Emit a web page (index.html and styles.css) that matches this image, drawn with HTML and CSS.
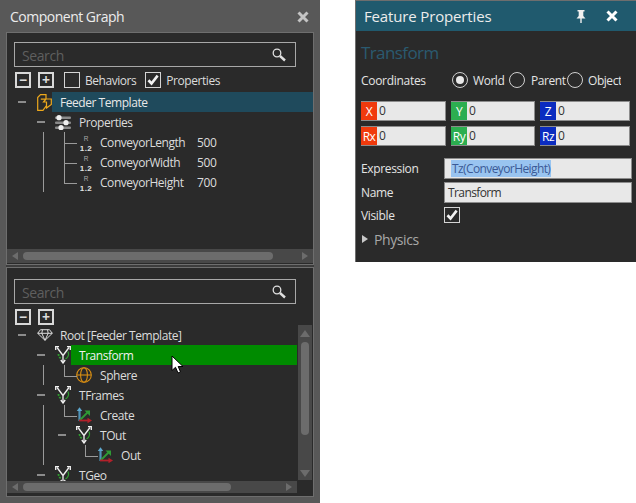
FILE: index.html
```html
<!DOCTYPE html>
<html lang="en">
<head>
<meta charset="utf-8">
<title>Component Graph</title>
<link rel="stylesheet" href="styles.css">
</head>
<body>
<svg class="defs" width="0" height="0">
  <symbol id="i-frame" viewBox="0 0 16 18">
    <path d="M8 9.500 2 1.500M8 9.500 14 1.500M8 9.500V16" fill="none" stroke="#f0f0f0" stroke-width="1.300"/>
    <path d="M.7 4V.7H4M15.300 4V.7H12M5.800 14 8 17 10.200 14" fill="none" stroke="#f4f4f4" stroke-width="1.300"/>
    <path d="M3.500 8A5.500 5.500 0 0 0 6.500 12.800" fill="none" stroke="#2f9e2f" stroke-width="1.800" stroke-dasharray="2 1"/>
    <path d="M13 5.500A6 6 0 0 1 10.500 13" fill="none" stroke="#2f9e2f" stroke-width="1.300"/>
  </symbol>
  <symbol id="i-axes" viewBox="0 0 16 16">
    <path d="M3.500 14V3" stroke="#4f93b8" stroke-width="2.200" fill="none"/>
    <path d="M.8 4 3.500 .3 6.200 4Z" fill="#5fa8cf"/>
    <path d="M4 13 11.500 5.500" stroke="#2f9a35" stroke-width="1.800" fill="none"/>
    <path d="M8.500 3.500H14V9Z" fill="#2f9a35"/>
    <path d="M3 13.500H13" stroke="#b3202a" stroke-width="1.800" fill="none"/>
    <path d="M11.500 10.800 16 13.500 11.500 16.200Z" fill="#b3202a"/>
  </symbol>
  <symbol id="i-sphere" viewBox="0 0 16 16">
    <g fill="none" stroke="#d98e12" stroke-width="1.100">
      <circle cx="8" cy="8" r="7.300"/>
      <ellipse cx="8" cy="8" rx="3.400" ry="7.300"/>
      <path d="M0.800 8H15.200"/>
    </g>
  </symbol>
  <symbol id="i-gem" viewBox="0 0 16 12">
    <path d="M3.500 .7H12.500L15.300 4.300 8 11.300 .7 4.300ZM.7 4.300H15.300M5.500 .7 4.800 4.300 8 11.300 11.200 4.300 10.500 .7" fill="none" stroke="#dcdcdc" stroke-width="1"/>
  </symbol>
  <symbol id="i-template" viewBox="0 0 15 17">
    <path d="M.7 3.500 3.500.7H9V5H14.300V10.500L9.500 14V11.500L6 16.300H.7ZM3.800 5.200H9M9 5 6.500 8H9.500V11.500" fill="none" stroke="#eda81c" stroke-width="1.200"/>
  </symbol>
  <symbol id="i-props" viewBox="0 0 16 15">
    <rect x="0" y="1.500" width="16" height="2.500" rx="1" fill="#8a8a8a"/>
    <rect x="0" y="6.500" width="16" height="2.500" rx="1" fill="#8a8a8a"/>
    <rect x="0" y="11.500" width="16" height="2.500" rx="1" fill="#8a8a8a"/>
    <circle cx="4" cy="2.700" r="2.600" fill="#f0f0f0"/>
    <circle cx="11" cy="7.700" r="2.600" fill="#f0f0f0"/>
    <circle cx="6" cy="12.700" r="2.600" fill="#f0f0f0"/>
  </symbol>
  <symbol id="i-search" viewBox="0 0 14 14">
    <circle cx="5" cy="5" r="3.800" fill="none" stroke="#e0e0e0" stroke-width="1.300"/>
    <path d="M8 8 13 12.500" stroke="#e0e0e0" stroke-width="2.400"/>
  </symbol>
  <symbol id="i-close" viewBox="0 0 12 12">
    <path d="M1.500 1.500 10.500 10.500M10.500 1.500 1.500 10.500" stroke="currentColor" stroke-width="3"/>
  </symbol>
  <symbol id="i-pin" viewBox="0 0 12 13">
    <path d="M2.500 0H9.500V1.500H8.300V6L10.500 8.500H6.700V13H5.300V8.500H1.500L3.700 6V1.500H2.500Z" fill="#f0f0f0"/>
  </symbol>
  <symbol id="i-check" viewBox="0 0 16 16">
    <path d="M2.800 8.300 6.300 12 13.300 3" fill="none" stroke="#f2f2f2" stroke-width="3"/>
  </symbol>
</svg>

<main class="page">
  <section class="graph">
    <header class="graph-title">
      <h1 class="title-text">Component Graph</h1>
      <svg class="close close-dim"><use href="#i-close"/></svg>
    </header>

    <div class="pane pane-top">
      <div class="search"><span class="search-hint">Search</span><svg class="search-icon"><use href="#i-search"/></svg></div>
      <div class="tools">
        <span class="tool-btn">−</span>
        <span class="tool-btn">+</span>
        <span class="check check-a"></span><span class="tool-label">Behaviors</span>
        <span class="check check-b"><svg class="check-mark"><use href="#i-check"/></svg></span><span class="tool-label">Properties</span>
      </div>
      <div class="tree tree-top">
        <div class="row l0"><span class="exp"></span><svg class="ic ic-tmpl"><use href="#i-template"/></svg><span class="label sel-blue">Feeder Template</span></div>
        <div class="row l1"><span class="exp"></span><svg class="ic ic-props"><use href="#i-props"/></svg><span class="label">Properties</span></div>
        <div class="row l2 guide branch-long"><svg class="real" viewBox="0 0 12 16"><text class="real-r" x="6" y="6" text-anchor="middle">R</text><text class="real-n" x="6" y="15.500" text-anchor="middle">1.2</text></svg><span class="label name">ConveyorLength</span><span class="val">500</span></div>
        <div class="row l2 guide branch-long"><svg class="real" viewBox="0 0 12 16"><text class="real-r" x="6" y="6" text-anchor="middle">R</text><text class="real-n" x="6" y="15.500" text-anchor="middle">1.2</text></svg><span class="label name">ConveyorWidth</span><span class="val">500</span></div>
        <div class="row l2 guide branch"><svg class="real" viewBox="0 0 12 16"><text class="real-r" x="6" y="6" text-anchor="middle">R</text><text class="real-n" x="6" y="15.500" text-anchor="middle">1.2</text></svg><span class="label name">ConveyorHeight</span><span class="val">700</span></div>
      </div>
      <div class="hbar hbar-top">
        <span class="arrow arrow-l"></span><span class="thumb thumb-top"></span><span class="arrow arrow-r"></span>
      </div>
    </div>

    <div class="splitter"></div>

    <div class="pane pane-bottom">
      <div class="search search-low"><span class="search-hint">Search</span><svg class="search-icon"><use href="#i-search"/></svg></div>
      <div class="tools tools-low">
        <span class="tool-btn">−</span>
        <span class="tool-btn">+</span>
      </div>
      <div class="scroll-area">
        <div class="scroll-main">
          <div class="tree tree-low">
            <div class="row l0"><span class="exp"></span><svg class="ic ic-gem"><use href="#i-gem"/></svg><span class="label">Root [Feeder Template]</span></div>
            <div class="row l1"><span class="exp"></span><svg class="ic ic-frame"><use href="#i-frame"/></svg><span class="label sel-green">Transform</span></div>
            <div class="row l2 guide branch"><svg class="ic ic-leaf"><use href="#i-sphere"/></svg><span class="label">Sphere</span></div>
            <div class="row l1"><span class="exp"></span><svg class="ic ic-frame"><use href="#i-frame"/></svg><span class="label">TFrames</span></div>
            <div class="row l2 guide branch-long"><svg class="ic ic-leaf"><use href="#i-axes"/></svg><span class="label">Create</span></div>
            <div class="row l1b guide"><span class="exp"></span><svg class="ic ic-frame"><use href="#i-frame"/></svg><span class="label">TOut</span></div>
            <div class="row l3 guide branch-deep"><svg class="ic ic-leaf"><use href="#i-axes"/></svg><span class="label">Out</span></div>
            <div class="row l1"><span class="exp"></span><svg class="ic ic-frame"><use href="#i-frame"/></svg><span class="label">TGeo</span></div>
          </div>
          <div class="hbar hbar-low">
            <span class="arrow arrow-l"></span><span class="thumb thumb-low"></span><span class="arrow arrow-r"></span>
          </div>
        </div>
        <div class="vbar"><span class="arrow arrow-u"></span><span class="vthumb"></span><span class="arrow arrow-d"></span></div>
      </div>
    </div>
    <svg class="cursor" viewBox="0 0 13 19"><path d="M1 1V15.500L4.500 12.300 7 18 9.500 16.900 7.200 11.500H12Z" fill="#fff" stroke="#000" stroke-width="1"/></svg>
  </section>

  <section class="props">
    <header class="props-title">
      <h2 class="title-text">Feature Properties</h2>
      <svg class="pin"><use href="#i-pin"/></svg>
      <svg class="close"><use href="#i-close"/></svg>
    </header>
    <div class="props-body">
      <div class="heading">Transform</div>
      <div class="coords">
        <span class="coords-label">Coordinates</span>
        <span class="radio radio-on"></span><span class="radio-text">World</span>
        <span class="radio"></span><span class="radio-text radio-text-wide">Parent</span>
        <span class="radio"></span><span class="radio-text radio-text-end">Object</span>
      </div>
      <div class="fields">
        <div class="field"><span class="tag red">X</span><span class="num">0</span></div>
        <div class="field"><span class="tag green">Y</span><span class="num">0</span></div>
        <div class="field"><span class="tag blue">Z</span><span class="num">0</span></div>
        <div class="field"><span class="tag red">Rx</span><span class="num">0</span></div>
        <div class="field"><span class="tag green">Ry</span><span class="num">0</span></div>
        <div class="field"><span class="tag blue">Rz</span><span class="num">0</span></div>
      </div>
      <div class="form">
        <span class="form-label">Expression</span>
        <div class="input input-expr"><span class="selected-text">Tz(ConveyorHeight)</span></div>
        <span class="form-label">Name</span>
        <div class="input">Transform</div>
        <span class="form-label">Visible</span>
        <span class="check check-visible"><svg class="check-mark"><use href="#i-check"/></svg></span>
      </div>
      <div class="physics"><span class="tri"></span><span>Physics</span></div>
    </div>
  </section>
</main>
</body>
</html>
```

FILE: styles.css
```css
* { box-sizing: border-box; }
html, body { margin: 0; padding: 0; background: #fff; }
body { font-family: "Open Sans", "Noto Sans", sans-serif; font-size: 12px; color: #dcdcdc; width: 636px; height: 503px; overflow: hidden; }
.defs { position: absolute; }
.page { display: flex; align-items: flex-start; height: 503px; }

/* left window */
.graph { position: relative; width: 320px; height: 503px; background: #585858; padding: 0 6px 6px; display: flex; flex-direction: column; flex: none; }
.graph-title { height: 32px; display: flex; align-items: center; justify-content: space-between; padding: 1px 5px 0 4px; flex: none; }
.title-text { margin: 0; font-size: 14px; font-weight: 400; letter-spacing: -.5px; color: #ececec; }
.close { width: 12px; height: 12px; color: #fff; flex: none; }
.close-dim { color: #c4c4c4; }

.pane { background: #2a2a2a; border: 1px solid #6e6e6e; position: relative; display: flex; flex-direction: column; min-height: 0; overflow: hidden; }
.pane-top { height: 233px; padding-top: 9px; flex: none; }
.pane-bottom { flex: 1; padding-top: 11px; border-top: 0; }
.splitter { height: 3px; flex: none; background: #3c3c3c; border-bottom: 1px solid #6e6e6e; }

.search { margin-left: 7px; width: 282px; height: 25px; border: 1px solid #a8a8a8; display: flex; align-items: center; justify-content: space-between; padding: 0 9px 0 7px; flex: none; }
.search-low { height: 25px; }
.search-hint { font-size: 14px; letter-spacing: -.4px; color: #5f5f5f; position: relative; top: 1px; }
.search-icon { width: 14px; height: 14px; }

.tools { display: flex; align-items: center; height: 16px; margin: 5px 0 0 8px; flex: none; }
.tools-low { margin-top: 5px; }
.tool-btn { width: 16px; height: 16px; border: 2px solid #d8d8d8; display: flex; align-items: center; justify-content: center; font-size: 14px; font-weight: 700; line-height: 1; color: #dcdcdc; margin-right: 7px; }
.check { width: 16px; height: 16px; border: 1px solid #d4d4d4; display: block; flex: none; }
.check-a { margin-left: 3px; }
.check-b { margin-left: 9px; }
.check-mark { width: 14px; height: 14px; display: block; }
.tool-label { margin-left: 5px; font-size: 12px; letter-spacing: -.45px; }

.tree { flex: 1; min-height: 0; overflow: hidden; }
.tree-top { margin-top: 4px; }
.tree-low { margin-top: 0; }
.row { position: relative; display: flex; align-items: center; height: 20px; }
.l0 { padding-left: 11px; }
.l1 { padding-left: 30px; }
.l1b { padding-left: 51px; }
.l2 { padding-left: 69px; }
.l3 { padding-left: 90px; }
.exp { width: 8px; height: 2px; background: #8c8c8c; flex: none; margin-right: 11px; }
.l1 .exp, .l1b .exp { margin-right: 10px; }
.label { display: flex; align-items: center; height: 20px; font-size: 12px; letter-spacing: -.45px; color: #dcdcdc; white-space: nowrap; flex: 1; padding-left: 8px; }
.name { flex: none; width: 105px; }
.val { font-size: 12px; letter-spacing: -.3px; }
.sel-blue { background: #1f4a5c; color: #e8e8e8; }
.sel-green { background: #008b00; color: #f0f0f0; }

.ic { flex: none; }
.ic-tmpl { width: 15px; height: 17px; }
.ic-props { width: 16px; height: 15px; }
.ic-gem { width: 16px; height: 12px; margin-right: -1px; }
.ic-frame { width: 16px; height: 18px; }
.ic-leaf { width: 16px; height: 16px; }
.real { width: 12px; height: 16px; margin-left: 4px; margin-top: 2px; flex: none; }
.real-r { font: 400 6.500px "Liberation Sans", sans-serif; fill: #a8a8a8; }
.real-n { font: 700 8px "Liberation Sans", sans-serif; letter-spacing: .4px; fill: #e0e0e0; }

/* tree connectors lie over the rows */
.guide::before { content: ""; position: absolute; left: 36px; top: 0; bottom: 0; width: 1px; background: #9a9a9a; }
.branch::after, .branch-long::after, .branch-deep::after { content: ""; position: absolute; left: 57px; top: 0; width: 12px; height: 11px; border-left: 1px solid #9a9a9a; border-bottom: 1px solid #9a9a9a; }
.branch-long + .branch-long::after, .branch-long + .branch::after { top: -9px; height: 20px; }
.branch-deep::after { left: 78px; }

/* scrollbars */
.hbar { height: 14px; flex: none; background: #484848; display: flex; align-items: center; padding: 0 5px; }
.hbar-top { margin-bottom: 1px; }
.hbar-low { height: 12px; }
.thumb { height: 8px; border-radius: 4px; background: #6c6c6c; margin-left: 5px; }
.thumb-top { width: 250px; }
.thumb-low { width: 208px; }
.arrow { width: 0; height: 0; display: block; flex: none; border-style: solid; border-color: transparent; }
.arrow-l { border-width: 4px 6px 4px 0; border-right-color: #6c6c6c; }
.arrow-r { border-width: 4px 0 4px 6px; border-left-color: #6c6c6c; margin-left: auto; }
.arrow-u { border-width: 0 5px 7px; border-bottom-color: #6c6c6c; }
.arrow-d { border-width: 7px 5px 0; border-top-color: #6c6c6c; margin-top: auto; }
.scroll-area { flex: 1; display: flex; min-height: 0; margin-bottom: 3px; }
.scroll-main { width: 290px; display: flex; flex-direction: column; min-height: 0; }
.vbar { width: 14px; margin-left: 1px; margin-bottom: 13px; background: #484848; display: flex; flex-direction: column; align-items: center; padding: 5px 0 3px; }
.vthumb { width: 8px; height: 93px; border-radius: 4px; background: #6c6c6c; margin-top: 5px; }

.cursor { position: absolute; left: 171px; top: 355px; width: 13px; height: 19px; }

/* right window */
.props { margin-left: 35px; width: 281px; height: 262px; background: #2a2a2a; border-left: 1px solid #6e6e6e; border-top: 1px solid #6e6e6e; flex: none; display: flex; flex-direction: column; }
.props-title { height: 30px; background: #205a6e; display: flex; align-items: center; padding: 0 18px 0 8px; flex: none; }
.props-title .title-text { flex: 1; font-size: 15px; letter-spacing: -.15px; }
.pin { width: 12px; height: 13px; margin-right: 19px; }
.props-body { padding: 11px 4px 0 5px; flex: 1; }
.heading { font-size: 17px; line-height: 22px; letter-spacing: -.6px; color: #2a5a70; }
.coords { display: flex; align-items: center; height: 18px; margin-top: 7px; font-size: 12px; }
.coords-label { width: 91px; letter-spacing: -.3px; color: #e4e4e4; }
.radio { width: 16px; height: 16px; border: 1px solid #d0d0d0; border-radius: 50%; flex: none; display: flex; align-items: center; justify-content: center; }
.radio-on::before { content: ""; width: 8px; height: 8px; border-radius: 50%; background: #e8e8e8; }
.radio-text { margin-left: 5px; width: 36px; letter-spacing: -.45px; color: #e4e4e4; white-space: nowrap; }
.radio-text-wide { margin-left: 6px; }
.radio-text-end { width: 33px; overflow: hidden; }
.fields { display: grid; grid-template-columns: 85px 84px 90px; column-gap: 5px; row-gap: 5px; margin-top: 12px; }
.field { height: 20px; display: flex; align-items: stretch; background: #e8e8e8; border: 1px solid #8c8c8c; border-left: 0; color: #333; }
.tag { width: 16px; display: flex; align-items: center; justify-content: center; color: #fff; flex: none; font-size: 12px; letter-spacing: -.5px; white-space: nowrap; }
.red { background: #f03a0d; }
.green { background: #2cae50; }
.blue { background: #0b2cc0; }
.num { padding-left: 2px; line-height: 17px; font-size: 12px; }
.form { display: grid; grid-template-columns: 83px 188px; align-items: center; row-gap: 3px; margin-top: 12px; }
.form-label { letter-spacing: -.35px; color: #e4e4e4; }
.input { height: 21px; background: #e8e8e8; border: 1px solid #8c8c8c; color: #333; display: flex; align-items: center; padding-left: 3px; letter-spacing: -.6px; }
.input-expr { padding-left: 6px; }
.selected-text { background: #99c4f0; color: #3b5a96; padding: 0 1px; }
.check-visible { margin: 1px 0 2px; }
.physics { display: flex; align-items: center; margin-top: 4px; font-size: 14px; letter-spacing: -.4px; color: #a8a8a8; height: 20px; }
.tri { width: 0; height: 0; border-style: solid; border-width: 4px 0 4px 6px; border-color: transparent transparent transparent #c8c8c8; margin: 0 6px 0 1px; }
```
